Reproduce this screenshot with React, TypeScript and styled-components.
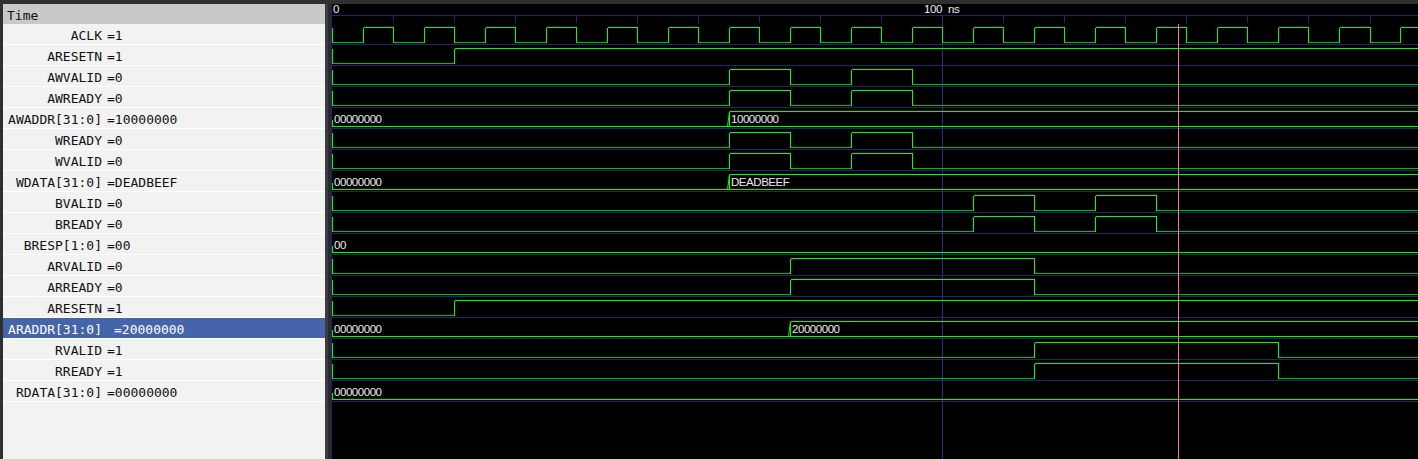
import React from 'react';
import styled, { createGlobalStyle } from 'styled-components';

const GlobalStyle = createGlobalStyle`
  html, body {
    margin: 0;
    padding: 0;
    background: #303030;
    overflow: hidden;
  }
`;

// масштаб: нс -> пиксели
const PX_PER_NS = 6.103;
const ROW_H = 21;
const WAVE_W = 1086;
const WAVE_H = 455;
const ROWS_TOP = 20;
const CURSOR_NS = 138.6;

const HIGH = '#00ff00';
const LOW = '#00c000';
const GRID = '#23236e';
const TEXT = '#ececec';

const Frame = styled.div`
  display: flex;
  height: 459px;
  padding: 4px 0 0 3px;
  box-sizing: border-box;
`;

const SignalPanel = styled.div`
  width: 322px;
  display: flex;
  flex-direction: column;
  background: #f2f2f2;
  font-family: 'DejaVu Sans Mono', 'Liberation Mono', monospace;
  font-size: 13px;
  color: #111;
`;

const HeaderRow = styled.div`
  height: 20px;
  box-sizing: border-box;
  display: flex;
  align-items: center;
  padding: 3px 0 0 4px;
  background: #c9c9c9;
`;

const SignalRow = styled.div<{ $selected?: boolean }>`
  height: 21px;
  box-sizing: border-box;
  display: flex;
  align-items: center;
  padding-top: 2px;
  border-bottom: 1px solid #ffffff;
  background: ${(p) => (p.$selected ? '#4564a9' : 'transparent')};
  color: ${(p) => (p.$selected ? '#ffffff' : '#111111')};
  white-space: pre;
`;

const SignalName = styled.span`
  width: 99px;
  text-align: right;
`;

const SignalValue = styled.span<{ $wide?: boolean }>`
  margin-left: ${(p) => (p.$wide ? '12px' : '5px')};
`;

const Splitter = styled.div`
  width: 6px;
  background: linear-gradient(to right, #3c3c3c 0 3px, #2a2a2a 3px 6px);
`;

const WavePanel = styled.div`
  flex: 1;
  background: #000;
  border-left: 1px solid #1e1e7a;
  overflow: hidden;
`;

const WaveSvg = styled.svg`
  display: block;
  shape-rendering: crispEdges;
  font-family: 'Liberation Sans', Arial, sans-serif;
  font-size: 11.5px;
  letter-spacing: -0.45px;
`;

type BitSig = { kind: 'bit'; name: string; value: string; high: [number, number][] };
type VecSig = { kind: 'vec'; name: string; value: string; segs: [number, string][] };
type Sig = BitSig | VecSig;

const END = WAVE_W / PX_PER_NS + 2;

const clock: [number, number][] = Array.from({ length: 18 }, (_, k) => [5 + 10 * k, 10 + 10 * k]);

const signals: Sig[] = [
  { kind: 'bit', name: 'ACLK', value: '1', high: clock },
  { kind: 'bit', name: 'ARESETN', value: '1', high: [[20, END]] },
  { kind: 'bit', name: 'AWVALID', value: '0', high: [[65, 75], [85, 95]] },
  { kind: 'bit', name: 'AWREADY', value: '0', high: [[65, 75], [85, 95]] },
  { kind: 'vec', name: 'AWADDR[31:0]', value: '10000000', segs: [[0, '00000000'], [65, '10000000']] },
  { kind: 'bit', name: 'WREADY', value: '0', high: [[65, 75], [85, 95]] },
  { kind: 'bit', name: 'WVALID', value: '0', high: [[65, 75], [85, 95]] },
  { kind: 'vec', name: 'WDATA[31:0]', value: 'DEADBEEF', segs: [[0, '00000000'], [65, 'DEADBEEF']] },
  { kind: 'bit', name: 'BVALID', value: '0', high: [[105, 115], [125, 135]] },
  { kind: 'bit', name: 'BREADY', value: '0', high: [[105, 115], [125, 135]] },
  { kind: 'vec', name: 'BRESP[1:0]', value: '00', segs: [[0, '00']] },
  { kind: 'bit', name: 'ARVALID', value: '0', high: [[75, 115]] },
  { kind: 'bit', name: 'ARREADY', value: '0', high: [[75, 115]] },
  { kind: 'bit', name: 'ARESETN', value: '1', high: [[20, END]] },
  { kind: 'vec', name: 'ARADDR[31:0]', value: '20000000', segs: [[0, '00000000'], [75, '20000000']] },
  { kind: 'bit', name: 'RVALID', value: '1', high: [[115, 155]] },
  { kind: 'bit', name: 'RREADY', value: '1', high: [[115, 155]] },
  { kind: 'vec', name: 'RDATA[31:0]', value: '00000000', segs: [[0, '00000000']] },
];

const SELECTED = 14;

const tx = (t: number) => Math.min(Math.round(t * PX_PER_NS), WAVE_W) + 0.5;

const BitWave: React.FC<{ sig: BitSig; top: number }> = ({ sig, top }) => {
  const hi = top + 3.5;
  const lo = top + 18.5;
  const parts: React.ReactNode[] = [];
  // начальный переход в t=0
  parts.push(<line key="init" x1={0.5} y1={hi} x2={0.5} y2={lo} stroke={HIGH} />);
  let cur = 0;
  sig.high.forEach(([a, b], i) => {
    if (a > cur) parts.push(<line key={`l${i}`} x1={tx(cur)} y1={lo} x2={tx(a)} y2={lo} stroke={LOW} />);
    parts.push(<line key={`r${i}`} x1={tx(a)} y1={lo} x2={tx(a)} y2={hi} stroke={HIGH} />);
    parts.push(<line key={`h${i}`} x1={tx(a)} y1={hi} x2={tx(b)} y2={hi} stroke={HIGH} />);
    if (b < END) parts.push(<line key={`f${i}`} x1={tx(b)} y1={hi} x2={tx(b)} y2={lo} stroke={HIGH} />);
    cur = b;
  });
  if (cur < END) parts.push(<line key="tail" x1={tx(cur)} y1={lo} x2={WAVE_W} y2={lo} stroke={LOW} />);
  return <g>{parts}</g>;
};

const VecWave: React.FC<{ sig: VecSig; top: number }> = ({ sig, top }) => {
  const hi = top + 3.5;
  const lo = top + 18.5;
  return (
    <g>
      <line x1={0} y1={lo} x2={WAVE_W} y2={lo} stroke={HIGH} />
      <line x1={0.5} y1={top + 12} x2={0.5} y2={lo} stroke={HIGH} />
      {sig.segs.map(([t, v], i) => {
        const x0 = tx(t);
        const next = sig.segs[i + 1];
        const x1 = next ? tx(next[0]) : WAVE_W;
        const zero = /^0+$/.test(v);
        return (
          <g key={i}>
            {t > 0 && (
              <>
                <line x1={x0 - 2} y1={lo} x2={x0} y2={hi} stroke={HIGH} shapeRendering="auto" />
                <line x1={x0} y1={hi} x2={x0} y2={lo} stroke={HIGH} />
              </>
            )}
            {!zero && <line x1={x0} y1={hi} x2={x1} y2={hi} stroke={HIGH} />}
            <text x={x0 + 1.5} y={top + 14.5} fill={TEXT}>
              {v}
            </text>
          </g>
        );
      })}
    </g>
  );
};

const Waves: React.FC = () => {
  const ticks = Array.from({ length: 18 }, (_, k) => (k + 1) * 10);
  return (
    <WaveSvg width={WAVE_W} height={WAVE_H} viewBox={`0 0 ${WAVE_W} ${WAVE_H}`}>
      <text x={1} y={8.5} fill={TEXT}>0</text>
      <text x={592} y={8.5} fill={TEXT}>100</text>
      <text x={616} y={8.5} fill={TEXT}>ns</text>
      <line x1={0} y1={11.5} x2={WAVE_W} y2={11.5} stroke={GRID} />
      {ticks.map((t) => (
        <line key={t} x1={tx(t)} y1={11} x2={tx(t)} y2={19} stroke={GRID} />
      ))}
      {signals.map((_, i) => (
        <line key={i} x1={0} y1={ROWS_TOP + ROW_H * i + 20.5} x2={WAVE_W} y2={ROWS_TOP + ROW_H * i + 20.5} stroke={GRID} />
      ))}
      <line x1={tx(100)} y1={11} x2={tx(100)} y2={WAVE_H} stroke="#2a2a90" />
      {signals.map((s, i) => {
        const top = ROWS_TOP + ROW_H * i;
        return s.kind === 'bit' ? <BitWave key={i} sig={s} top={top} /> : <VecWave key={i} sig={s} top={top} />;
      })}
      <line x1={tx(CURSOR_NS)} y1={ROWS_TOP} x2={tx(CURSOR_NS)} y2={WAVE_H} stroke="#ff7b7b" />
    </WaveSvg>
  );
};

const App: React.FC = () => {
  return (
    <>
      <GlobalStyle />
      <Frame>
        <SignalPanel>
          <HeaderRow>Time</HeaderRow>
          {signals.map((s, i) => (
            <SignalRow key={i} $selected={i === SELECTED}>
              <SignalName>{s.name}</SignalName>
              <SignalValue $wide={i === SELECTED}>={s.value}</SignalValue>
            </SignalRow>
          ))}
        </SignalPanel>
        <Splitter />
        <WavePanel>
          <Waves />
        </WavePanel>
      </Frame>
    </>
  );
};

export default App;
